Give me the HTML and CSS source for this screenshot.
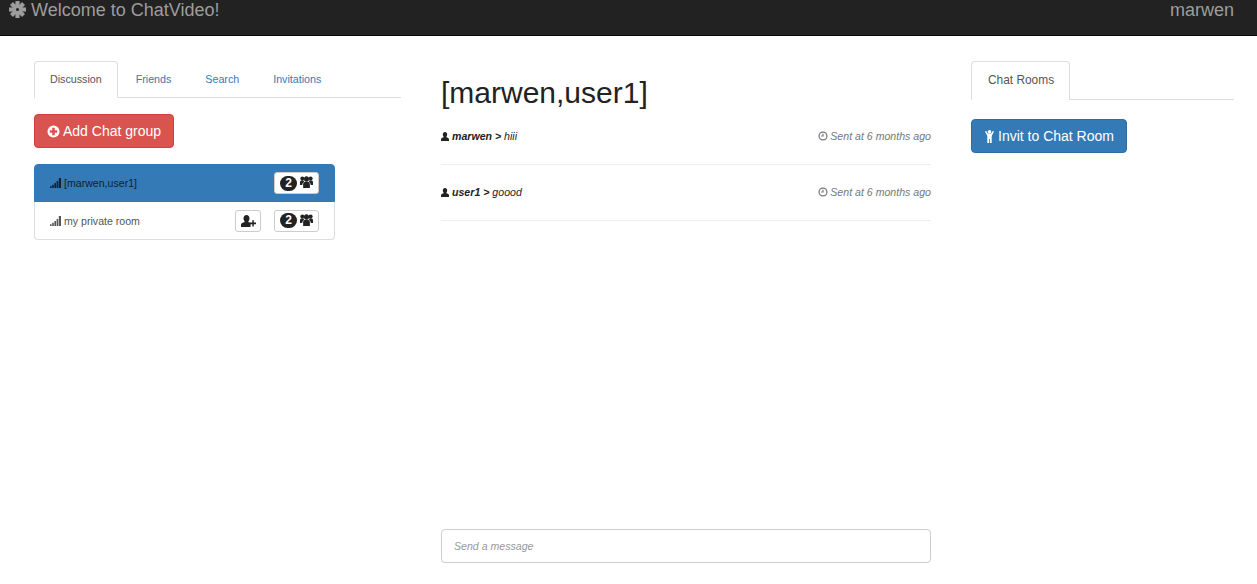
FILE: index.html
```html
<!DOCTYPE html>
<html lang="en">
<head>
<meta charset="utf-8">
<title>ChatVideo</title>
<link rel="stylesheet" href="styles.css">
</head>
<body>
<svg class="defs" aria-hidden="true">
  <symbol id="i-user" viewBox="0 0 12 12" preserveAspectRatio="none"><path d="M6 0c2 0 3.300 1.300 3.300 3.300 0 1.300-.5 2.400-1.200 3v.7c1.700.5 3.900 1.200 3.900 2.800V12H0V9.800c0-1.600 2.200-2.300 3.900-2.800v-.7c-.7-.6-1.200-1.700-1.200-3C2.700 1.300 4 0 6 0z"/></symbol>
  <symbol id="i-users" viewBox="0 0 15 13" preserveAspectRatio="none"><circle cx="7.500" cy="3.300" r="2.900"/><circle cx="2.700" cy="2.800" r="2.300"/><circle cx="12.300" cy="2.800" r="2.300"/><path d="M3.600 13V9.200c0-1.900 1.300-3 2.700-3h2.400c1.400 0 2.700 1.100 2.700 3V13z"/><path d="M0 9.800V6.700c0-1 .8-1.700 1.800-1.700h2.400c.1.600.3 1.100.7 1.500-1.300.5-2.300 1.600-2.300 3.300zM15 9.800V6.700c0-1-.8-1.700-1.800-1.700h-2.400c-.1.600-.3 1.100-.7 1.500 1.300.5 2.300 1.600 2.300 3.300z"/></symbol>
  <symbol id="i-add" viewBox="0 0 15 11" preserveAspectRatio="none"><path d="M5.500 0c1.800 0 3 1.200 3 3 0 1.200-.5 2.200-1.100 2.800v.7c1 .3 2 .6 2.700 1.200v.8h-.6v2.500H0V9c0-1.500 2-2.100 3.600-2.500v-.7C3 5.200 2.500 4.200 2.500 3c0-1.800 1.200-3 3-3z"/><path d="M11.300 4.800h1.500v2.100H15v1.500h-2.200v2.100h-1.500V8.400H9.100V6.900h2.200z"/></symbol>
  <symbol id="i-signal" viewBox="0 0 11 10"><path d="M0 8.200h1.600V10H0zM2.200 6.800h1.600V10H2.200zM4.400 5h1.600v5H4.400zM6.600 3h1.600v7H6.600zM8.800 0H11v10H8.800z"/></symbol>
  <symbol id="i-clock" viewBox="0 0 12 12"><path fill-rule="evenodd" d="M6 .5a5.500 5.500 0 1 1 0 11A5.500 5.500 0 0 1 6 .5zm0 1.500a4 4 0 1 0 0 8 4 4 0 0 0 0-8zM5.300 3.200h1.400v3.500H3.700V5.400h1.600z"/></symbol>
  <symbol id="i-plus" viewBox="0 0 14 14"><path fill-rule="evenodd" d="M7 .5a6.500 6.500 0 1 1 0 13A6.500 6.500 0 0 1 7 .5zM5.600 3v2.600H3v2.800h2.600V11h2.800V8.400H11V5.600H8.400V3z"/></symbol>
  <symbol id="i-man" viewBox="0 0 9 13"><circle cx="4.500" cy="1.800" r="1.800"/><path d="M0 1.500 1.200 1l1.700 2.500h3.200L7.800 1 9 1.500 6.700 6v7H4.900V9h-.8v4H2.300V6z"/></symbol>
  <symbol id="i-cog" viewBox="0 0 18 18"><rect x="6.800" y="0" width="4.400" height="18"/><rect x="6.800" y="0" width="4.400" height="18" transform="rotate(45 9 9)"/><rect x="6.800" y="0" width="4.400" height="18" transform="rotate(90 9 9)"/><rect x="6.800" y="0" width="4.400" height="18" transform="rotate(135 9 9)"/><circle class="cog-hole" cx="9" cy="9" r="1.600"/></symbol>
</svg>

<header class="navbar">
  <div class="brand"><svg class="ico-cog"><use href="#i-cog"/></svg><span>Welcome to ChatVideo!</span></div>
  <div class="nav-user">marwen</div>
</header>

<main class="layout">
  <section class="col-left">
    <ul class="tabs">
      <li class="tab active">Discussion</li>
      <li class="tab">Friends</li>
      <li class="tab">Search</li>
      <li class="tab">Invitations</li>
    </ul>
    <button class="btn btn-red" type="button"><svg class="ico-plus"><use href="#i-plus"/></svg>Add Chat group</button>
    <ul class="rooms">
      <li class="room selected">
        <svg class="ico-signal"><use href="#i-signal"/></svg>
        <span class="room-name">[marwen,user1]</span>
        <span class="mini-btn count"><b class="badge">2</b><svg class="ico-users"><use href="#i-users"/></svg></span>
      </li>
      <li class="room">
        <svg class="ico-signal"><use href="#i-signal"/></svg>
        <span class="room-name">my private room</span>
        <span class="mini-btn add"><svg class="ico-add"><use href="#i-add"/></svg></span>
        <span class="mini-btn count"><b class="badge">2</b><svg class="ico-users"><use href="#i-users"/></svg></span>
      </li>
    </ul>
  </section>

  <section class="col-mid">
    <h1 class="title">[marwen,user1]</h1>
    <div class="msg">
      <div class="msg-text"><svg class="ico-user"><use href="#i-user"/></svg><b>marwen &gt;</b> hiii</div>
      <div class="msg-time"><svg class="ico-clock"><use href="#i-clock"/></svg>Sent at 6 months ago</div>
    </div>
    <div class="msg">
      <div class="msg-text"><svg class="ico-user"><use href="#i-user"/></svg><b>user1 &gt;</b> goood</div>
      <div class="msg-time"><svg class="ico-clock"><use href="#i-clock"/></svg>Sent at 6 months ago</div>
    </div>
    <input class="composer" type="text" placeholder="Send a message">
  </section>

  <section class="col-right">
    <ul class="tabs tabs-right">
      <li class="tab active">Chat Rooms</li>
    </ul>
    <button class="btn btn-blue" type="button"><svg class="ico-man"><use href="#i-man"/></svg>Invit to Chat Room</button>
  </section>
</main>
</body>
</html>
```

FILE: styles.css
```css
* { box-sizing: border-box; }
html, body { margin: 0; padding: 0; }
body {
  height: 584px;
  overflow: hidden;
  background: #fff;
  color: #333;
  font-family: "Liberation Sans", Arial, sans-serif;
  font-size: 14px;
  line-height: 20px;
}
.defs { display: none; }
svg { fill: currentColor; display: block; flex: none; }
ul { list-style: none; margin: 0; padding: 0; }

.navbar {
  height: 36px;
  background: #222;
  border-bottom: 1px solid #080808;
  color: #9d9d9d;
  font-size: 18px;
  display: flex;
  justify-content: space-between;
  padding: 0 23px 0 9px;
}
.brand { display: flex; gap: 5px; align-items: center; height: 20px; }
.ico-cog { width: 17px; height: 17px; margin-top: -1px; }
.cog-hole { fill: #222; }

.layout {
  display: grid;
  grid-template-columns: 367px 490px 263px;
  column-gap: 40px;
  padding: 25px 23px 0 34px;
}

.tabs { display: flex; border-bottom: 1px solid #ddd; height: 37px; }
.tab {
  font-size: 10.7px;
  padding: 7px 15px 0;
  margin-right: 2px;
  height: 37px;
  line-height: 20px;
  border: 1px solid transparent;
  border-bottom: 0;
  color: #337ab7;
}
.tab.active {
  color: #555;
  background: #fff;
  border-color: #ddd;
  border-radius: 4px 4px 0 0;
}
.tabs-right { height: 39px; }
.tabs-right .tab { font-size: 11.9px; height: 39px; width: 99px; padding: 8px 0 0 16px; }

.btn {
  display: flex;
  align-items: center;
  height: 34px;
  padding: 0 12px;
  font: inherit;
  color: #fff;
  white-space: nowrap;
  border: 1px solid;
  border-radius: 4px;
}
.btn-red { background: #d9534f; border-color: #d43f3a; margin-top: 16px; width: 140px; }
.btn-blue { background: #337ab7; border-color: #2e6da4; margin-top: 19px; width: 156px; }
.ico-plus { width: 13px; height: 13px; margin-right: 3px; }
.ico-man { width: 9px; height: 13px; margin: 0 4px 0 1px; }

.rooms { width: 301px; margin-top: 16px; }
.room {
  display: flex;
  align-items: center;
  height: 38px;
  padding: 0 15px;
  font-size: 10.6px;
  color: #555;
  background: #fff;
  border: 1px solid #ddd;
  border-top-width: 0;
  border-radius: 0 0 4px 4px;
}
.room.selected {
  background: #337ab7;
  border: 1px solid #337ab7;
  border-radius: 4px 4px 0 0;
  color: #14202e;
}
.ico-signal { width: 11px; height: 10px; margin-right: 3px; }
.room-name { flex: 1; }

.mini-btn {
  display: flex;
  align-items: center;
  height: 22px;
  background: #fff;
  border: 1px solid #ccc;
  border-radius: 3px;
  color: #222;
}
.count { width: 45px; padding-left: 5px; gap: 3px; }
.add { width: 26px; margin-right: 13px; justify-content: center; }
.badge {
  width: 17px;
  height: 15px;
  border-radius: 8px;
  background: #222;
  color: #fff;
  font-size: 12px;
  line-height: 15px;
  text-align: center;
}
.ico-users { width: 13px; height: 12px; margin-top: -2px; }
.ico-add { width: 15px; height: 12px; }

.title {
  margin: 0;
  padding-top: 15px;
  font-size: 30px;
  font-weight: 400;
  line-height: 33px;
  color: #222;
  height: 48px;
}
.msg {
  display: flex;
  justify-content: space-between;
  height: 56px;
  padding-top: 17px;
  border-bottom: 1px solid #eee;
  font-size: 10.6px;
  font-style: italic;
}
.msg-text, .msg-time { display: flex; align-items: center; height: 20px; white-space: pre; }
.msg-text { color: #222; }
.msg-text b { font-weight: 700; }
.msg-time { color: #777; }
.ico-user { width: 8px; height: 9px; margin-right: 3px; }
.ico-clock { width: 10px; height: 10px; margin-right: 2px; }

.composer {
  display: block;
  width: 490px;
  height: 34px;
  margin-top: 308px;
  padding: 0 12px;
  border: 1px solid #ccc;
  border-radius: 4px;
  font: italic 10.6px "Liberation Sans", Arial, sans-serif;
  color: #555;
  background: #fff;
  outline: 0;
}
.composer::placeholder { color: #999; opacity: 1; }
```
